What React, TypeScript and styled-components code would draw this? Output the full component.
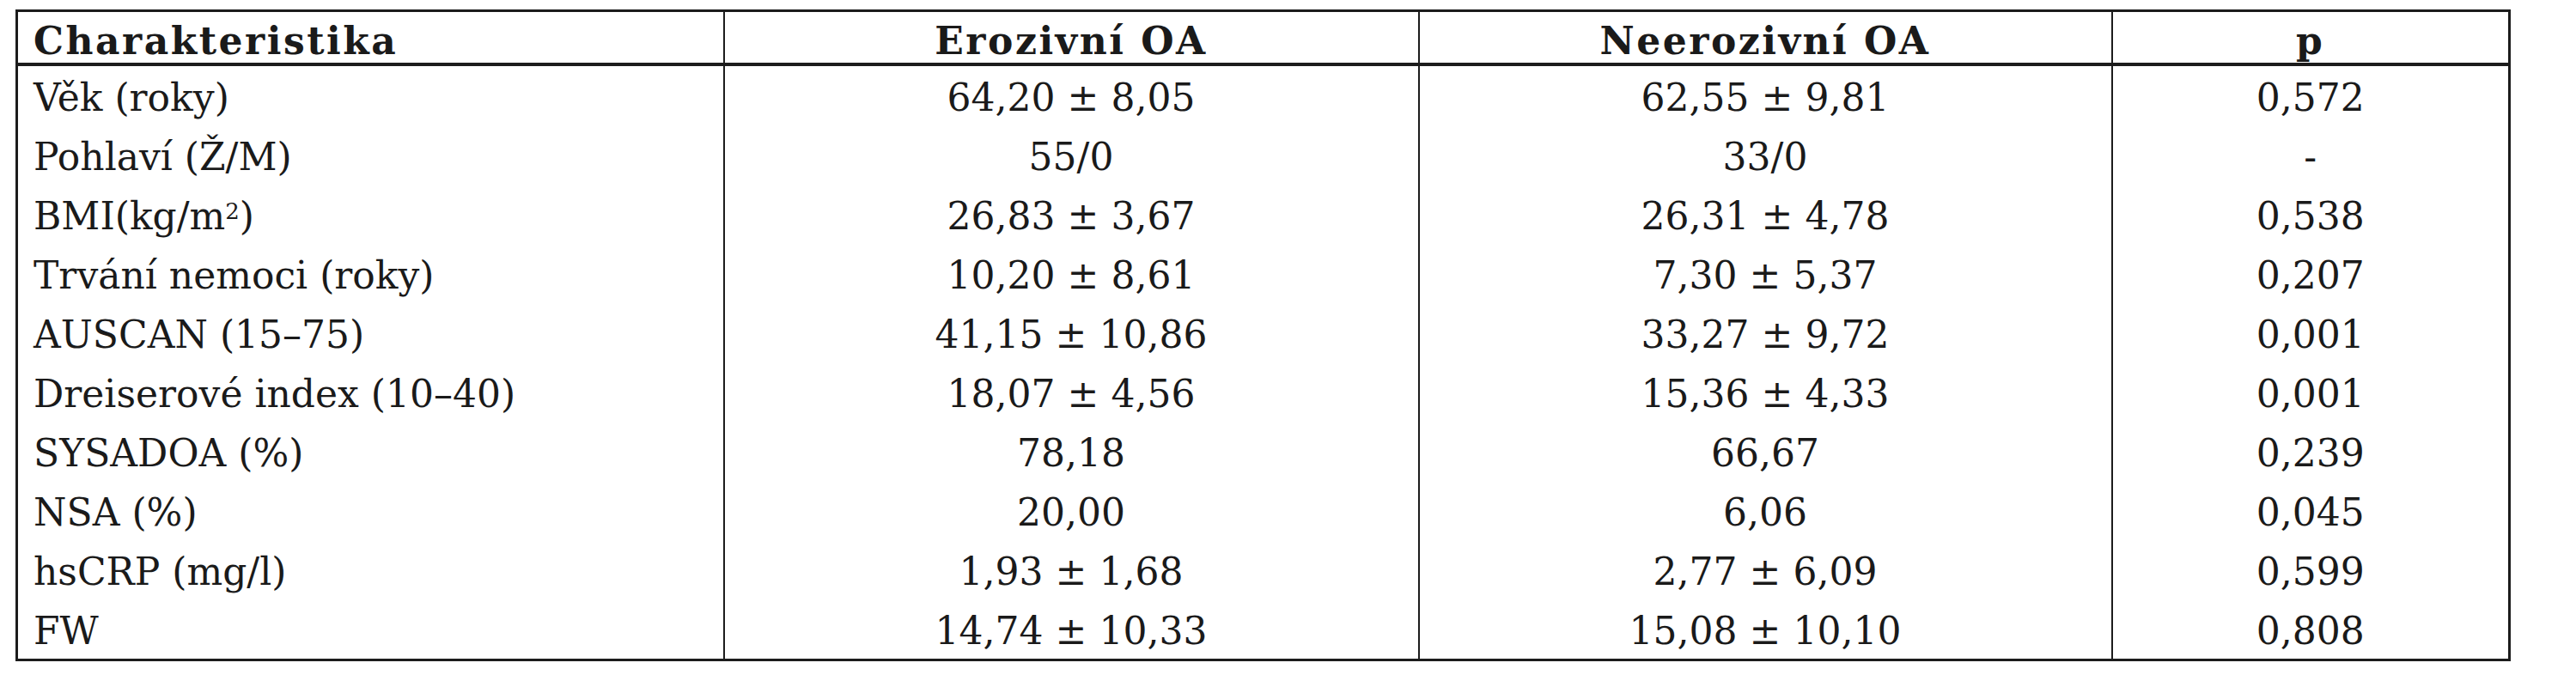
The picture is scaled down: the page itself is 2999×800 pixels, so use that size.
import styled, { createGlobalStyle } from "styled-components";

const GlobalStyle = createGlobalStyle`
  html, body {
    margin: 0;
    padding: 0;
    background: #fff;
  }
`;

const Page = styled.div`
  padding: 11px 0 0 18px;
  width: 2999px;
  height: 800px;
  box-sizing: border-box;
`;

const Table = styled.table`
  width: 2904px;
  border-collapse: collapse;
  table-layout: fixed;
  border: 3px solid #1c1c1c;

  font-family: "DejaVu Serif", "Liberation Serif", serif;
  font-size: 44px;
  color: #1a1a1a;
`;

const HeadCell = styled.th<{ align?: "left" | "center" }>`
  height: 51px;
  padding: 8px 0 0 ${(p) => (p.align === "left" ? "18px" : "0")};
  text-align: ${(p) => p.align ?? "center"};
  line-height: 51px;
  font-weight: 700;
  letter-spacing: 2.5px;
  white-space: nowrap;
  border-left: 2px solid #1c1c1c;
  border-right: 2px solid #1c1c1c;
  border-bottom: 4px solid #1c1c1c;
`;

const BodyRow = styled.tr`
  height: 69px;
`;

const Cell = styled.td<{ align?: "left" | "center" }>`
  height: 65px;
  padding: 4px 0 0 ${(p) => (p.align === "left" ? "18px" : "0")};
  text-align: ${(p) => p.align ?? "center"};
  vertical-align: middle;
  line-height: 65px;
  white-space: nowrap;
  border-left: 2px solid #1c1c1c;
  border-right: 2px solid #1c1c1c;
`;

const Sup = styled.sup`
  font-size: 26px;
  line-height: 0;
  vertical-align: 12px;
`;

type Row = {
  label: React.ReactNode;
  erosive: string;
  nonErosive: string;
  p: string;
};

const rows: Row[] = [
  { label: "Věk (roky)", erosive: "64,20 ± 8,05", nonErosive: "62,55 ± 9,81", p: "0,572" },
  { label: "Pohlaví (Ž/M)", erosive: "55/0", nonErosive: "33/0", p: "-" },
  {
    label: (
      <>
        BMI(kg/m<Sup>2</Sup>)
      </>
    ),
    erosive: "26,83 ± 3,67",
    nonErosive: "26,31 ± 4,78",
    p: "0,538",
  },
  { label: "Trvání nemoci (roky)", erosive: "10,20 ± 8,61", nonErosive: "7,30 ± 5,37", p: "0,207" },
  { label: "AUSCAN (15–75)", erosive: "41,15 ± 10,86", nonErosive: "33,27 ± 9,72", p: "0,001" },
  { label: "Dreiserové index (10–40)", erosive: "18,07 ± 4,56", nonErosive: "15,36 ± 4,33", p: "0,001" },
  { label: "SYSADOA (%)", erosive: "78,18", nonErosive: "66,67", p: "0,239" },
  { label: "NSA (%)", erosive: "20,00", nonErosive: "6,06", p: "0,045" },
  { label: "hsCRP (mg/l)", erosive: "1,93 ± 1,68", nonErosive: "2,77 ± 6,09", p: "0,599" },
  { label: "FW", erosive: "14,74 ± 10,33", nonErosive: "15,08 ± 10,10", p: "0,808" },
];

const App: React.FC = () => {
  return (
    <>
      <GlobalStyle />
      <Page>
        <Table>
          <colgroup>
            <col style={{ width: 823 }} />
            <col style={{ width: 809 }} />
            <col style={{ width: 807 }} />
            <col style={{ width: 463 }} />
          </colgroup>
          <thead>
            <tr>
              <HeadCell align="left">Charakteristika</HeadCell>
              <HeadCell>Erozivní OA</HeadCell>
              <HeadCell>Neerozivní OA</HeadCell>
              <HeadCell>p</HeadCell>
            </tr>
          </thead>
          <tbody>
            {rows.map((row, i) => (
              <BodyRow key={i}>
                <Cell align="left">{row.label}</Cell>
                <Cell>{row.erosive}</Cell>
                <Cell>{row.nonErosive}</Cell>
                <Cell>{row.p}</Cell>
              </BodyRow>
            ))}
          </tbody>
        </Table>
      </Page>
    </>
  );
};

export default App;
